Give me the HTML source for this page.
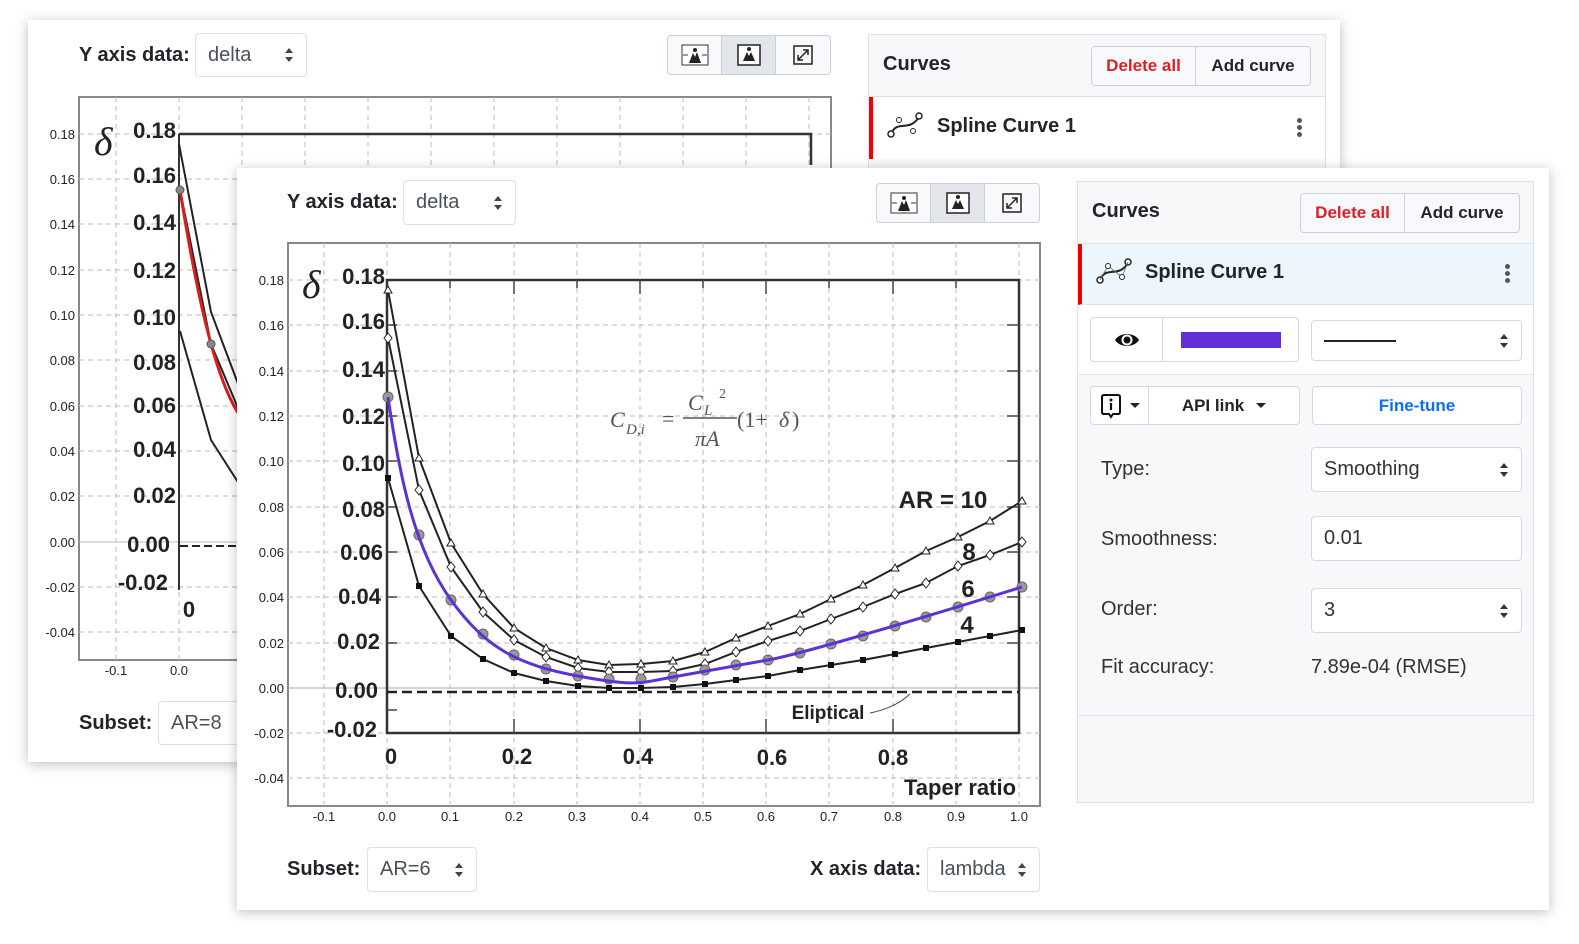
<!DOCTYPE html>
<html><head><meta charset="utf-8">
<style>
*{box-sizing:border-box}
body{margin:0;width:1579px;height:944px;background:#fff;position:relative;overflow:hidden;font-family:"Liberation Sans",sans-serif;color:#212529}
.win{position:absolute;background:#fff;box-shadow:0 2px 12px rgba(0,0,0,.25);overflow:hidden}
.abs{position:absolute}
.lbl{position:absolute;font-weight:bold;font-size:20px}
.sel{position:absolute;border:1px solid #dcdfe3;border-radius:4px;background:#fff;font-size:20px;color:#495057;padding-left:12px;display:flex;align-items:center}
.sel .ar{position:absolute;right:12px;top:50%;margin-top:-8px;width:10px;height:16px}
.tb{position:absolute;border:1px solid #ccd0d5;border-radius:4px;display:flex;background:#f8f9fa;overflow:hidden}
.tb div{width:54px;height:100%;display:flex;align-items:center;justify-content:center;border-right:1px solid #ccd0d5}
.tb div:last-child{border-right:none}
.tb .on{background:#e2e6ea}
.panel{position:absolute;border:1px solid #dee2e6;background:#f7f8fa}
.ph{position:absolute;left:0;right:0;top:0;height:62px;border-bottom:1px solid #dee2e6;background:#f7f8fa}
.btng{position:absolute;border:1px solid #ccd0d5;border-radius:4px;display:flex;background:#f8f9fa;font-weight:bold;font-size:17px}
.btng div{display:flex;align-items:center;justify-content:center}
.field{position:absolute;border:1px solid #d5d9de;border-radius:4px;background:#fff;font-size:20px;color:#333;display:flex;align-items:center;padding-left:12px}
.pl{position:absolute;font-size:20px;color:#333}
</style></head><body>

<!-- BACK WINDOW -->
<div class="win" style="left:28px;top:20px;width:1312px;height:742px">
 <div class="lbl" style="left:51px;top:24px">Y axis data:</div>
 <div class="sel" style="left:167px;top:13px;width:112px;height:44px">delta
  <svg class="ar" viewBox="0 0 10 16"><path d="M1 6L5 1L9 6ZM1 10L5 15L9 10Z" fill="#444"/></svg></div>
 <div class="tb" style="left:639px;top:15px;width:164px;height:40px">
  <div><svg width="30" height="24" viewBox="0 0 30 24"><rect x="2" y="2" width="26" height="20" fill="#fff" stroke="#333"/><path d="M9 20L13 10L15 14L17 9L21 20Z" fill="#222"/><circle cx="15" cy="7" r="2" fill="#222"/><path d="M3 12H8M22 12H27" stroke="#333"/></svg></div>
  <div class="on"><svg width="26" height="24" viewBox="0 0 26 24"><rect x="2" y="2" width="22" height="20" fill="#fff" stroke="#222" stroke-width="1.5"/><path d="M7 18L11 9L13 13L15 9L19 18Z" fill="#222"/><circle cx="13" cy="6" r="2" fill="#222"/></svg></div>
  <div><svg width="24" height="24" viewBox="0 0 24 24"><rect x="3" y="3" width="18" height="18" fill="none" stroke="#222" stroke-width="1.5"/><path d="M7 17L17 7M12 7H17V12M7 12V17H12" stroke="#222" stroke-width="1.5" fill="none"/></svg></div>
 </div>
 <div class="lbl" style="left:51px;top:692px">Subset:</div>
 <div class="sel" style="left:130px;top:681px;width:110px;height:44px">AR=8</div>
 <svg class="abs" style="left:0;top:0" width="900" height="742" viewBox="28 20 900 742">
  <rect x="79" y="97" width="752" height="563" fill="none" stroke="#888" stroke-width="2"/>
  <g stroke="#bbb" stroke-dasharray="5,4" stroke-width="1">
   <path d="M116 97V660M179 97V660M242 97V660M305 97V660M368 97V660M431 97V660M494 97V660M557 97V660M620 97V660M683 97V660M746 97V660M809 97V660"/>
   <path d="M79 134H831M79 179H831M79 224H831M79 270H831M79 315H831M79 360H831M79 406H831M79 451H831M79 496H831M79 587H831M79 632H831"/>
  </g>
  <path d="M79 542H831" stroke="#bbb"/>
  <g font-size="13" fill="#222" text-anchor="end"><text x="75" y="139">0.18</text><text x="75" y="184">0.16</text><text x="75" y="229">0.14</text><text x="75" y="275">0.12</text><text x="75" y="320">0.10</text><text x="75" y="365">0.08</text><text x="75" y="411">0.06</text><text x="75" y="456">0.04</text><text x="75" y="501">0.02</text><text x="75" y="547">0.00</text><text x="75" y="592">-0.02</text><text x="75" y="637">-0.04</text></g>
  <g font-size="13" fill="#222" text-anchor="middle"><text x="116" y="675">-0.1</text><text x="179" y="675">0.0</text></g>
  <path d="M179 134H811V165" stroke="#333" stroke-width="2.5" fill="none"/>
  <path d="M179 134V590" stroke="#333" stroke-width="2" fill="none"/>
  <g font-weight="bold" font-size="22" fill="#222" text-anchor="end"><text x="176" y="138">0.18</text><text x="176" y="183">0.16</text><text x="176" y="230">0.14</text><text x="176" y="278">0.12</text><text x="176" y="325">0.10</text><text x="176" y="370">0.08</text><text x="176" y="413">0.06</text><text x="176" y="457">0.04</text><text x="176" y="503">0.02</text><text x="170" y="552">0.00</text><text x="168" y="590">-0.02</text><text x="189" y="617" text-anchor="middle">0</text></g>
  <text x="94" y="155" font-family="Liberation Serif" font-style="italic" font-size="40" fill="#222">δ</text>
  <path d="M179 144L211 312L243 397" stroke="#222" stroke-width="2" fill="none"/>
  <path d="M180 190L211 344L243 420" stroke="#222" stroke-width="2" fill="none"/>
  <path d="M180 331L211 440L243 490" stroke="#222" stroke-width="2" fill="none"/>
  <path d="M180 190Q196 290 211 344T243 420" stroke="#d42020" stroke-width="3" fill="none"/>
  <circle cx="180" cy="190" r="4" fill="#888" stroke="#555"/><circle cx="211" cy="344" r="4" fill="#888" stroke="#555"/>
  <path d="M180 546H240" stroke="#222" stroke-width="2" stroke-dasharray="8,4"/>
 </svg>
 <div class="panel" style="left:840px;top:14px;width:458px;height:300px">
  <div class="ph"><div class="abs" style="left:14px;top:18px;font-size:20px;font-weight:bold">Curves</div>
   <div class="btng" style="left:222px;top:11px;width:220px;height:40px"><div style="width:104px;color:#dc1f26;border-right:1px solid #ccd0d5">Delete all</div><div style="width:114px">Add curve</div></div></div>
  <div class="abs" style="left:0;top:62px;width:456px;height:62px;background:#fff;border-left:4px solid #e00"></div>
  <svg class="abs" style="left:18px;top:76px" width="38" height="28" viewBox="0 0 38 28"><path d="M4 23C10 8 22 22 32 6" stroke="#222" stroke-width="2" fill="none"/><circle cx="4" cy="23" r="3" fill="#fff" stroke="#222" stroke-width="1.5"/><circle cx="32" cy="5" r="3" fill="#fff" stroke="#222" stroke-width="1.5"/><circle cx="12" cy="9" r="2.5" fill="#fff" stroke="#222"/><circle cx="26" cy="20" r="2.5" fill="#fff" stroke="#222"/></svg>
  <div class="abs" style="left:68px;top:80px;font-size:20px;font-weight:bold">Spline Curve 1</div>
  <div class="abs" style="left:428px;top:82px;width:5px;height:20px;background:radial-gradient(circle,#555 2.3px,transparent 2.6px) 0 0/5px 7px"></div>
 </div>
</div>

<!-- FRONT WINDOW -->
<div class="win" style="left:237px;top:168px;width:1312px;height:742px">
 <div class="lbl" style="left:50px;top:23px">Y axis data:</div>
 <div class="sel" style="left:166px;top:12px;width:113px;height:45px">delta
  <svg class="ar" viewBox="0 0 10 16"><path d="M1 6L5 1L9 6ZM1 10L5 15L9 10Z" fill="#444"/></svg></div>
 <div class="tb" style="left:639px;top:15px;width:164px;height:40px">
  <div><svg width="30" height="24" viewBox="0 0 30 24"><rect x="2" y="2" width="26" height="20" fill="#fff" stroke="#333"/><path d="M9 20L13 10L15 14L17 9L21 20Z" fill="#222"/><circle cx="15" cy="7" r="2" fill="#222"/><path d="M3 12H8M22 12H27" stroke="#333"/></svg></div>
  <div class="on"><svg width="26" height="24" viewBox="0 0 26 24"><rect x="2" y="2" width="22" height="20" fill="#fff" stroke="#222" stroke-width="1.5"/><path d="M7 18L11 9L13 13L15 9L19 18Z" fill="#222"/><circle cx="13" cy="6" r="2" fill="#222"/></svg></div>
  <div><svg width="24" height="24" viewBox="0 0 24 24"><rect x="3" y="3" width="18" height="18" fill="none" stroke="#222" stroke-width="1.5"/><path d="M7 17L17 7M12 7H17V12M7 12V17H12" stroke="#222" stroke-width="1.5" fill="none"/></svg></div>
 </div>
 <div class="lbl" style="left:50px;top:690px">Subset:</div>
 <div class="sel" style="left:130px;top:679px;width:110px;height:45px">AR=6
  <svg class="ar" viewBox="0 0 10 16"><path d="M1 6L5 1L9 6ZM1 10L5 15L9 10Z" fill="#444"/></svg></div>
 <div class="lbl" style="left:573px;top:690px">X axis data:</div>
 <div class="sel" style="left:690px;top:679px;width:113px;height:45px">lambda
  <svg class="ar" viewBox="0 0 10 16"><path d="M1 6L5 1L9 6ZM1 10L5 15L9 10Z" fill="#444"/></svg></div>

 <svg class="abs" style="left:0;top:0" width="820" height="680" viewBox="237 168 820 680">
  <defs>
   <marker id="tri" markerWidth="10" markerHeight="10" refX="5" refY="5" markerUnits="userSpaceOnUse"><path d="M5 1L9 8H1Z" fill="#fff" stroke="#222"/></marker>
   <marker id="dia" markerWidth="10" markerHeight="12" refX="5" refY="6" markerUnits="userSpaceOnUse"><path d="M5 1L9 6L5 11L1 6Z" fill="#fff" stroke="#222"/></marker>
   <marker id="sq" markerWidth="8" markerHeight="8" refX="3" refY="3" markerUnits="userSpaceOnUse"><rect width="6" height="6" fill="#111"/></marker>
   <marker id="cir" markerWidth="12" markerHeight="12" refX="6" refY="6" markerUnits="userSpaceOnUse"><circle cx="6" cy="6" r="5" fill="#999" stroke="#666"/></marker>
  </defs>
  <rect x="288" y="243" width="752" height="563" fill="#fff" stroke="#888" stroke-width="2"/>
  <g stroke="#bbb" stroke-dasharray="5,4" stroke-width="1">
   <path d="M324 243V806M387 243V806M450 243V806M514 243V806M577 243V806M640 243V806M703 243V806M766 243V806M829 243V806M893 243V806M956 243V806M1019 243V806"/>
   <path d="M288 280H1040M288 325H1040M288 371H1040M288 416H1040M288 461H1040M288 507H1040M288 552H1040M288 597H1040M288 643H1040M288 733H1040M288 778H1040"/>
  </g>
  <path d="M288 688H1040" stroke="#aaa"/>
  <g font-size="13" fill="#222" text-anchor="end"><text x="284" y="285">0.18</text><text x="284" y="330">0.16</text><text x="284" y="376">0.14</text><text x="284" y="421">0.12</text><text x="284" y="466">0.10</text><text x="284" y="512">0.08</text><text x="284" y="557">0.06</text><text x="284" y="602">0.04</text><text x="284" y="648">0.02</text><text x="284" y="693">0.00</text><text x="284" y="738">-0.02</text><text x="284" y="783">-0.04</text></g>
  <g font-size="13" fill="#222" text-anchor="middle"><text x="324" y="821">-0.1</text><text x="387" y="821">0.0</text><text x="450" y="821">0.1</text><text x="514" y="821">0.2</text><text x="577" y="821">0.3</text><text x="640" y="821">0.4</text><text x="703" y="821">0.5</text><text x="766" y="821">0.6</text><text x="829" y="821">0.7</text><text x="893" y="821">0.8</text><text x="956" y="821">0.9</text><text x="1019" y="821">1.0</text></g>
  <path d="M387 280H1019V733H387Z" stroke="#333" stroke-width="2.5" fill="none"/>
  <g stroke="#444" stroke-width="1.5"><path d="M450 280v8M514 280v14M577 280v8M640 280v14M703 280v8M766 280v14M829 280v8M893 280v14M956 280v8M514 733v-14M640 733v-14M766 733v-14M893 733v-14M1019 325h-12M1019 371h-12M1019 416h-12M1019 461h-12M1019 507h-12M1019 552h-12M1019 597h-12M1019 643h-12M387 325h10M387 371h10M387 416h10M387 461h10M387 507h10M387 552h10M387 597h10M387 643h10M387 710h10"/></g>
  <g font-weight="bold" font-size="22" fill="#222" text-anchor="end"><text x="385" y="284">0.18</text><text x="385" y="329">0.16</text><text x="385" y="377">0.14</text><text x="385" y="424">0.12</text><text x="385" y="471">0.10</text><text x="385" y="517">0.08</text><text x="383" y="560">0.06</text><text x="381" y="604">0.04</text><text x="380" y="649">0.02</text><text x="378" y="698">0.00</text><text x="377" y="737">-0.02</text></g>
  <g font-weight="bold" font-size="22" fill="#222" text-anchor="middle"><text x="391" y="764">0</text><text x="517" y="764">0.2</text><text x="638" y="764">0.4</text><text x="772" y="765">0.6</text><text x="893" y="765">0.8</text></g>
  <text x="302" y="298" font-family="Liberation Serif" font-style="italic" font-size="40" fill="#222">δ</text>
  <text x="960" y="795" text-anchor="middle" font-weight="bold" font-size="22" fill="#222">Taper ratio</text>
  <text x="943" y="508" text-anchor="middle" font-weight="bold" font-size="24" fill="#222">AR = 10</text>
  <g font-weight="bold" font-size="24" fill="#222" text-anchor="middle"><text x="969" y="560">8</text><text x="968" y="597">6</text><text x="967" y="633">4</text></g>
  <text x="828" y="719" text-anchor="middle" font-weight="bold" font-size="19" fill="#222">Eliptical</text>
  <path d="M870 713Q895 708 910 694" stroke="#444" fill="none"/>
  <path d="M387 692H1019" stroke="#222" stroke-width="2.5" stroke-dasharray="10,5"/>
  <g font-family="Liberation Serif" font-style="italic" fill="#555" font-size="22">
   <text x="610" y="427">C</text><text x="626" y="434" font-size="15">D,i</text><text x="662" y="426" font-style="normal">=</text>
   <text x="688" y="410">C</text><text x="704" y="415" font-size="15">L</text><text x="719" y="398" font-size="14" font-style="normal">2</text>
   <text x="695" y="446">πA</text><text x="737" y="427" font-style="normal">(1+</text><text x="779" y="427">δ</text><text x="792" y="427" font-style="normal">)</text>
  </g>
  <path d="M683 418H737" stroke="#555" stroke-width="1.5"/>
  <polyline fill="none" stroke="#222" stroke-width="2" marker-start="url(#tri)" marker-mid="url(#tri)" marker-end="url(#tri)" points="388,290 419,458 451,543 483,594 514,628 546,648 578,660 609,665 641,664 673,661 705,652 736,638 768,626 800,614 831,599 863,585 895,568 926,551 958,537 990,521 1022,501"/>
  <polyline fill="none" stroke="#222" stroke-width="2" marker-start="url(#dia)" marker-mid="url(#dia)" marker-end="url(#dia)" points="388,338 419,490 451,567 483,612 514,640 546,657 578,668 609,672 641,672 673,671 705,664 736,652 768,641 800,631 831,619 863,607 895,594 926,583 958,566 990,555 1022,542"/>
  <polyline fill="none" stroke="#222" stroke-width="2" marker-start="url(#sq)" marker-mid="url(#sq)" marker-end="url(#sq)" points="388,478 419,586 451,636 483,659 514,673 546,681 578,686 609,688 641,688 673,687 705,684 736,680 768,676 800,670 831,665 863,660 895,654 926,648 958,642 990,636 1022,630"/>
  <polyline fill="none" stroke="none" marker-start="url(#cir)" marker-mid="url(#cir)" marker-end="url(#cir)" points="388,397 419,535 451,600 483,634 514,655 546,669 578,676 609,679 641,679 673,677 705,670 736,665 768,660 800,653 831,644 863,636 895,626 926,617 958,607 990,597 1022,587"/>
  <path d="M388,397 C400,480 415,550 451,600 S 520,665 578,676 S 640,683 673,677 S 740,665 768,660 S 900,625 1022,587" fill="none" stroke="#5b32d6" stroke-width="3"/>
 </svg>

 <div class="panel" style="left:840px;top:13px;width:457px;height:622px">
  <div class="ph"><div class="abs" style="left:14px;top:18px;font-size:20px;font-weight:bold">Curves</div>
   <div class="btng" style="left:222px;top:11px;width:220px;height:40px"><div style="width:104px;color:#dc1f26;border-right:1px solid #ccd0d5">Delete all</div><div style="width:114px">Add curve</div></div></div>
  <div class="abs" style="left:0;top:62px;width:455px;height:61px;background:#edf5fd;border-left:4px solid #e00;border-bottom:1px solid #dee2e6"></div>
  <svg class="abs" style="left:18px;top:75px" width="38" height="28" viewBox="0 0 38 28"><path d="M4 23C10 8 22 22 32 6" stroke="#222" stroke-width="2" fill="none"/><circle cx="4" cy="23" r="3" fill="#fff" stroke="#222" stroke-width="1.5"/><circle cx="32" cy="5" r="3" fill="#fff" stroke="#222" stroke-width="1.5"/><path d="M4 23L12 9L26 20L32 5" stroke="#666" stroke-width=".8" fill="none"/><circle cx="12" cy="9" r="2.5" fill="#fff" stroke="#222"/><circle cx="26" cy="20" r="2.5" fill="#fff" stroke="#222"/></svg>
  <div class="abs" style="left:67px;top:79px;font-size:20px;font-weight:bold">Spline Curve 1</div>
  <div class="abs" style="left:427px;top:81px;width:5px;height:20px;background:radial-gradient(circle,#555 2.3px,transparent 2.6px) 0 0/5px 7px"></div>
  <div class="abs" style="left:0;top:123px;width:455px;height:70px;background:#fff;border-bottom:1px solid #e5e7ea"></div>
  <div class="abs" style="left:12px;top:135px;width:209px;height:45px;border:1px solid #d5d9de;border-radius:4px;background:#fff;display:flex">
   <div style="width:72px;border-right:1px solid #d5d9de;display:flex;align-items:center;justify-content:center"><svg width="26" height="20" viewBox="0 0 26 20"><path d="M1 10C6 2 20 2 25 10C20 18 6 18 1 10Z" fill="#111"/><circle cx="13" cy="10" r="5.5" fill="#fff"/><circle cx="13" cy="10" r="3.5" fill="#111"/></svg></div>
   <div style="flex:1;display:flex;align-items:center;justify-content:center"><div style="width:100px;height:16px;background:#6230d4"></div></div>
  </div>
  <div class="field" style="left:233px;top:138px;width:211px;height:41px"><div style="width:72px;height:2px;background:#222"></div><svg class="abs" style="right:12px;top:12px" width="10" height="16" viewBox="0 0 10 16"><path d="M1 6L5 1L9 6ZM1 10L5 15L9 10Z" fill="#333"/></svg></div>
  <div class="abs" style="left:12px;top:204px;width:210px;height:39px;border:1px solid #d5d9de;border-radius:4px;background:#fff;display:flex;font-weight:bold;font-size:17px">
   <div style="width:58px;border-right:1px solid #d5d9de;display:flex;align-items:center;justify-content:center;gap:8px"><svg width="22" height="26" viewBox="0 0 22 26"><path d="M4 2H18Q20 2 20 4V19Q20 21 18 21H13L11 24L9 21H4Q2 21 2 19V4Q2 2 4 2Z" fill="none" stroke="#111" stroke-width="2"/><circle cx="11" cy="7" r="1.5" fill="#111"/><path d="M11 10V17" stroke="#111" stroke-width="2.2"/></svg><span style="border-left:5px solid transparent;border-right:5px solid transparent;border-top:5px solid #222"></span></div>
   <div style="flex:1;display:flex;align-items:center;justify-content:center;gap:12px">API link <span style="border-left:5px solid transparent;border-right:5px solid transparent;border-top:5px solid #222"></span></div>
  </div>
  <div class="abs" style="left:234px;top:204px;width:210px;height:39px;border:1px solid #d5d9de;border-radius:4px;background:#fff;display:flex;align-items:center;justify-content:center;font-weight:bold;font-size:17px;color:#0d6efd">Fine-tune</div>
  <div class="pl" style="left:23px;top:276px">Type:</div>
  <div class="field" style="left:233px;top:265px;width:211px;height:45px">Smoothing<svg class="abs" style="right:12px;top:14px" width="10" height="16" viewBox="0 0 10 16"><path d="M1 6L5 1L9 6ZM1 10L5 15L9 10Z" fill="#333"/></svg></div>
  <div class="pl" style="left:23px;top:346px">Smoothness:</div>
  <div class="field" style="left:233px;top:334px;width:211px;height:45px">0.01</div>
  <div class="pl" style="left:23px;top:416px">Order:</div>
  <div class="field" style="left:233px;top:406px;width:211px;height:45px">3<svg class="abs" style="right:12px;top:14px" width="10" height="16" viewBox="0 0 10 16"><path d="M1 6L5 1L9 6ZM1 10L5 15L9 10Z" fill="#333"/></svg></div>
  <div class="pl" style="left:23px;top:474px">Fit accuracy:</div>
  <div class="pl" style="left:233px;top:474px">7.89e-04 (RMSE)</div>
  <div class="abs" style="left:0;top:533px;width:455px;height:1px;background:#e2e5e8"></div>
 </div>
</div>
</body></html>
